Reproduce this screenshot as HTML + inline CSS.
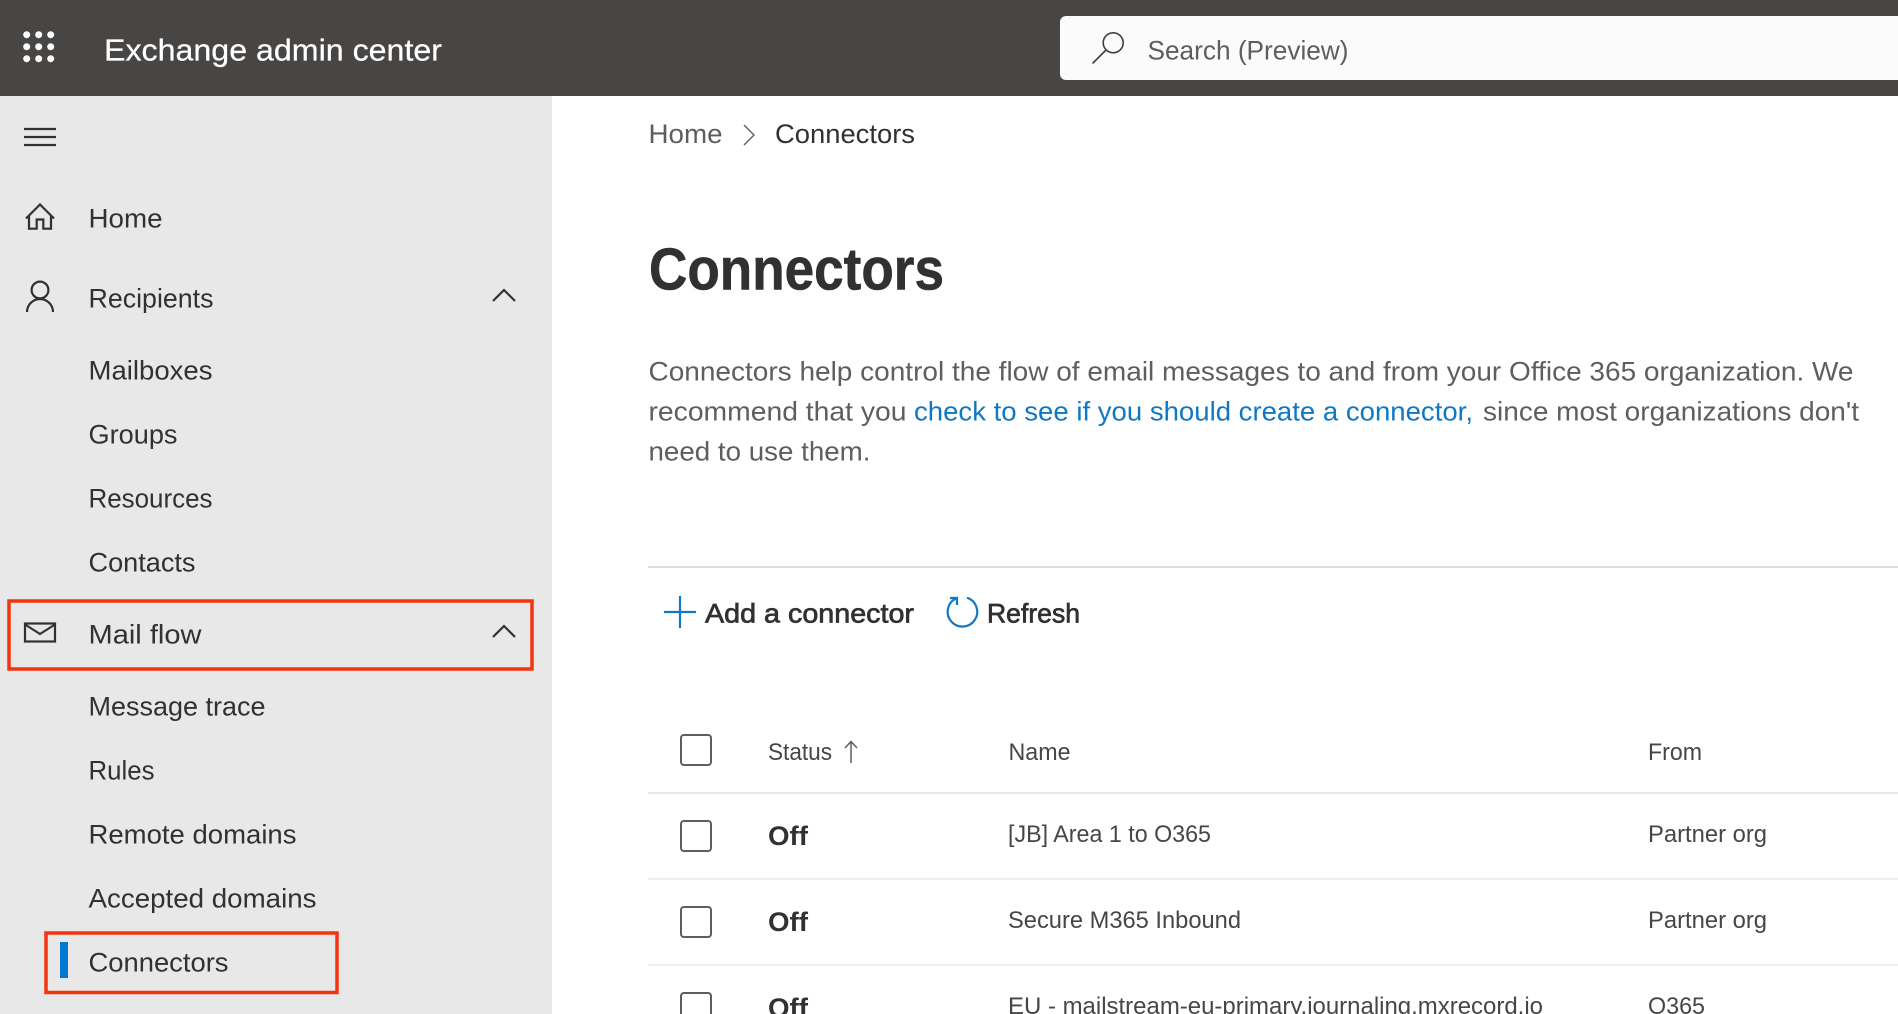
<!DOCTYPE html>
<html lang="en">
<head>
<meta charset="utf-8">
<title>Exchange admin center</title>
<style>
html,body{margin:0;padding:0;width:1898px;height:1014px;overflow:hidden;background:#fff}
body{position:relative;font-family:"Liberation Sans",sans-serif}
.b{position:absolute;display:block}
svg{position:absolute;left:0;top:0}
text{font-family:"Liberation Sans",sans-serif;font-size:27px;fill:#323130}
.g{fill:#605e5c}
.h{font-size:24px;fill:#484644}
.s{stroke:#323130;stroke-width:.7px}
.i{fill:none;stroke:#323130;stroke-width:2.2}
.c{fill:#fff;stroke:#605e5c;stroke-width:2}
.r{fill:none;stroke:#f2340f;stroke-width:3.5}
.l{fill:none;stroke:#0f78c8;stroke-width:2.2}
</style>
</head>
<body>
<div class="b" style="left:0;top:0;width:1898px;height:96px;background:#484644"></div>
<div class="b" style="left:1060px;top:16px;width:838px;height:64px;background:#fbfbfb;border-radius:6px 0 0 6px"></div>
<div class="b" style="left:0;top:96px;width:552px;height:918px;background:#e8e8e8"></div>
<div class="b" style="left:648px;top:566px;width:1250px;height:2px;background:#dedede"></div>
<div class="b" style="left:648px;top:792px;width:1250px;height:2px;background:#e8e8e8"></div>
<div class="b" style="left:648px;top:878px;width:1250px;height:2px;background:#efefef"></div>
<div class="b" style="left:648px;top:964px;width:1250px;height:2px;background:#efefef"></div>
<div class="b" style="left:60px;top:942px;width:8px;height:36px;background:#0078d4"></div>

<svg width="1898" height="1014" viewBox="0 0 1898 1014" xmlns="http://www.w3.org/2000/svg">
  <!-- waffle -->
  <g fill="#fff">
    <circle cx="26.7" cy="34.7" r="3.5"/><circle cx="38.7" cy="34.7" r="3.5"/><circle cx="50.7" cy="34.7" r="3.5"/>
    <circle cx="26.7" cy="46.7" r="3.5"/><circle cx="38.7" cy="46.7" r="3.5"/><circle cx="50.7" cy="46.7" r="3.5"/>
    <circle cx="26.7" cy="58.7" r="3.5"/><circle cx="38.7" cy="58.7" r="3.5"/><circle cx="50.7" cy="58.7" r="3.5"/>
  </g>
  <text x="104" y="60.5" style="font-size:31px;fill:#fff;stroke:#fff;stroke-width:.25px" textLength="338" lengthAdjust="spacingAndGlyphs">Exchange admin center</text>

  <!-- search -->
  <circle cx="1113.2" cy="42.8" r="10" fill="none" stroke="#3f3f3f" stroke-width="1.6"/>
  <path d="M1106 50 L1092.5 63.5" fill="none" stroke="#3f3f3f" stroke-width="1.6"/>
  <text class="g" x="1147.5" y="59.5" textLength="201" lengthAdjust="spacingAndGlyphs">Search (Preview)</text>

  <!-- sidebar icons -->
  <path class="i" d="M24 129H56M24 137H56M24 145H56"/>
  <path class="i" d="M26 218.5L40 204.5L54 218.5M29 215.5V228.7H36.7V219.5H43.3V228.7H51V215.5"/>
  <circle class="i" cx="40" cy="290" r="8.4"/>
  <path class="i" d="M27 312A13 13 0 0 1 53 312"/>
  <path class="i" d="M493 301L504 290L515 301"/>
  <rect class="i" x="25" y="623.5" width="30" height="18"/>
  <path class="i" d="M25 624.5L40 634L55 624.5"/>
  <path class="i" d="M493 637L504 626L515 637"/>

  <!-- sidebar labels -->
  <text x="88.5" y="227.5" textLength="74" lengthAdjust="spacingAndGlyphs">Home</text>
  <text x="88.5" y="307.5" textLength="125" lengthAdjust="spacingAndGlyphs">Recipients</text>
  <text x="88.5" y="379.5" textLength="124" lengthAdjust="spacingAndGlyphs">Mailboxes</text>
  <text x="88.5" y="443.5" textLength="89" lengthAdjust="spacingAndGlyphs">Groups</text>
  <text x="88.5" y="507.5" textLength="124" lengthAdjust="spacingAndGlyphs">Resources</text>
  <text x="88.5" y="571.5" textLength="107" lengthAdjust="spacingAndGlyphs">Contacts</text>
  <text x="88.5" y="643.5" textLength="113" lengthAdjust="spacingAndGlyphs">Mail flow</text>
  <text x="88.5" y="715.5" textLength="177" lengthAdjust="spacingAndGlyphs">Message trace</text>
  <text x="88.5" y="779.5" textLength="66" lengthAdjust="spacingAndGlyphs">Rules</text>
  <text x="88.5" y="843.5" textLength="208" lengthAdjust="spacingAndGlyphs">Remote domains</text>
  <text x="88.5" y="907.5" textLength="228" lengthAdjust="spacingAndGlyphs">Accepted domains</text>
  <text x="88.5" y="971.5" textLength="140" lengthAdjust="spacingAndGlyphs">Connectors</text>

  <!-- highlight boxes -->
  <rect class="r" x="9" y="601" width="523" height="68"/>
  <rect class="r" x="46" y="933" width="291" height="59.5"/>

  <!-- breadcrumb -->
  <text class="g" x="648.5" y="143" textLength="74" lengthAdjust="spacingAndGlyphs">Home</text>
  <path d="M744 125L754 135L744 145" fill="none" stroke="#605e5c" stroke-width="1.4"/>
  <text x="775" y="143" textLength="140" lengthAdjust="spacingAndGlyphs">Connectors</text>

  <!-- heading -->
  <text x="649" y="289.5" font-weight="bold" style="font-size:59px;stroke:#323130;stroke-width:.6px" textLength="295" lengthAdjust="spacingAndGlyphs">Connectors</text>

  <!-- description -->
  <text class="g" x="648.5" y="380.5" textLength="1205" lengthAdjust="spacingAndGlyphs">Connectors help control the flow of email messages to and from your Office 365 organization. We</text>
  <text class="g" x="648.5" y="420.5" textLength="258" lengthAdjust="spacingAndGlyphs">recommend that you</text>
  <text x="914" y="420.5" style="fill:#0f78c4" textLength="559" lengthAdjust="spacingAndGlyphs">check to see if you should create a connector,</text>
  <text class="g" x="1483" y="420.5" textLength="376" lengthAdjust="spacingAndGlyphs">since most organizations don't</text>
  <text class="g" x="648.5" y="460.5" textLength="222" lengthAdjust="spacingAndGlyphs">need to use them.</text>

  <!-- toolbar -->
  <path class="l" d="M664 612H696M680 596V628"/>
  <text class="s" x="705" y="622.5" textLength="209" lengthAdjust="spacingAndGlyphs">Add a connector</text>
  <path class="l" d="M967 597.7A14.8 14.8 0 1 1 955.5 598.7"/>
  <path class="l" d="M950 598H957V605"/>
  <text class="s" x="987" y="622.5" textLength="93" lengthAdjust="spacingAndGlyphs">Refresh</text>

  <!-- table header -->
  <rect class="c" x="681" y="735" width="30" height="30" rx="3"/>
  <text class="h" x="768" y="760" textLength="64" lengthAdjust="spacingAndGlyphs">Status</text>
  <path d="M851 763V742M845 748L851 741.5L857 748" fill="none" stroke="#605e5c" stroke-width="1.5"/>
  <text class="h" x="1008.5" y="760" textLength="62" lengthAdjust="spacingAndGlyphs">Name</text>
  <text class="h" x="1648" y="760" textLength="54" lengthAdjust="spacingAndGlyphs">From</text>

  <!-- rows -->
  <rect class="c" x="681" y="821" width="30" height="30" rx="3"/>
  <text x="768" y="845" font-weight="bold" textLength="40" lengthAdjust="spacingAndGlyphs">Off</text>
  <text class="h" x="1008" y="842" textLength="203" lengthAdjust="spacingAndGlyphs">[JB] Area 1 to O365</text>
  <text class="h" x="1648" y="842" textLength="119" lengthAdjust="spacingAndGlyphs">Partner org</text>

  <rect class="c" x="681" y="907" width="30" height="30" rx="3"/>
  <text x="768" y="931" font-weight="bold" textLength="40" lengthAdjust="spacingAndGlyphs">Off</text>
  <text class="h" x="1008" y="928" textLength="233" lengthAdjust="spacingAndGlyphs">Secure M365 Inbound</text>
  <text class="h" x="1648" y="928" textLength="119" lengthAdjust="spacingAndGlyphs">Partner org</text>

  <rect class="c" x="681" y="993" width="30" height="30" rx="3"/>
  <text x="768" y="1017" font-weight="bold" textLength="40" lengthAdjust="spacingAndGlyphs">Off</text>
  <text class="h" x="1008" y="1014" textLength="535" lengthAdjust="spacingAndGlyphs">EU - mailstream-eu-primary.journaling.mxrecord.io</text>
  <text class="h" x="1648" y="1014" textLength="57" lengthAdjust="spacingAndGlyphs">O365</text>
</svg>
</body>
</html>
